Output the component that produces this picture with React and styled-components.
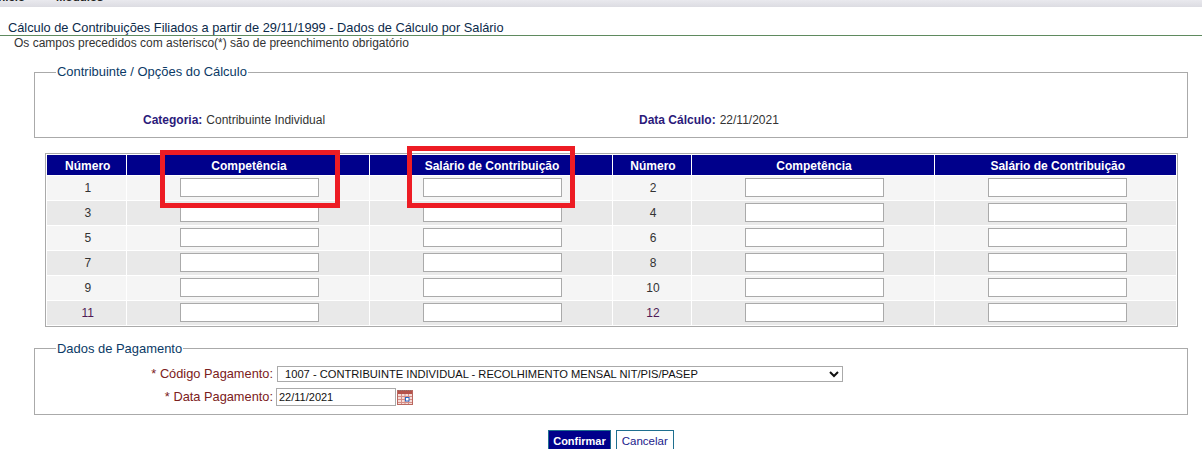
import { createGlobalStyle, styled } from "styled-components";

const GlobalStyle = createGlobalStyle`
  html, body {
    margin: 0;
    padding: 0;
    background: #fff;
  }
  body {
    font-family: "Liberation Sans", Arial, sans-serif;
    font-size: 12px;
    color: #333;
    overflow: hidden;
  }
`;

const Page = styled.div`
  position: relative;
  width: 1202px;
  height: 449px;
  overflow: hidden;
`;

const MenuBar = styled.div`
  height: 7px;
  background: linear-gradient(#e9e9ee, #dcdce2);
  display: flex;
  align-items: flex-end;
  gap: 31px;
  overflow: hidden;
`;

const MenuItem = styled.span`
  font-size: 11.5px;
  font-weight: 700;
  line-height: 14px;
  color: #222;
  margin-bottom: 3px;
  flex: none;
  &:first-child {
    margin-left: -5px;
  }
`;

const Title = styled.div`
  margin-top: 14px;
  padding-left: 8px;
  height: 14px;
  line-height: 14px;
  font-size: 12.8px;
  color: #0b2a4a;
  border-bottom: 1px solid #5f8a5f;
  white-space: nowrap;
`;

const Hint = styled.div`
  padding-left: 14px;
  line-height: 14px;
  height: 14px;
  font-size: 12px;
  color: #333;
`;

const Box = styled.fieldset`
  margin: ${(p) => p.$top}px 14px 0 34px;
  padding: 0;
  height: ${(p) => p.$height}px;
  box-sizing: border-box;
  border: 1px solid #aaa;
  min-width: 0;
`;

const Legend = styled.legend`
  margin-left: 21px;
  padding: 0 1px;
  font-size: 12.95px;
  line-height: 14px;
  color: #0b3a66;
`;

const SummaryRow = styled.div`
  display: grid;
  grid-template-columns: 496px 1fr;
  padding: 34px 0 0 108px;
  line-height: 14px;
  font-size: 12px;
`;

const SummaryLabel = styled.b`
  color: #2b1a7a;
  margin-right: 4px;
`;

const GridWrap = styled.div`
  margin: 15px 0 0 45px;
  width: 1133px;
  border: 1px solid #aaa;
  box-sizing: border-box;
  padding: 1px;
`;

const GridTable = styled.table`
  width: 100%;
  table-layout: fixed;
  border-collapse: collapse;
`;

const HeadCell = styled.th`
  background: #00008b;
  color: #fff;
  height: 20px;
  padding: 2px 0 0 3px;
  box-sizing: border-box;
  font-size: 12px;
  font-weight: 700;
  text-align: center;
  border-left: 1px solid #fff;
  &:first-child {
    border-left: 0;
  }
  &:last-child {
    padding-left: 5px;
  }
`;

const Row = styled.tr`
  background: ${(p) => (p.$odd ? "#f5f5f5" : "#e9e9e9")};
`;

const NumCell = styled.td`
  height: 24px;
  padding: 0 0 0 3px;
  text-align: center;
  color: ${(p) => (p.$dark ? "#4f1a55" : "#333")};
  border-left: 1px solid #fff;
  border-top: 1px solid #fff;
  &:first-child {
    border-left: 0;
  }
`;

const InputCell = styled.td`
  padding: 0 0 0 3px;
  text-align: center;
  border-left: 1px solid #fff;
  border-top: 1px solid #fff;
  &:last-child {
    padding-left: 5px;
  }
`;

const TextInput = styled.input`
  display: block;
  margin: 0 auto;
  width: 139px;
  height: 19px;
  box-sizing: border-box;
  padding: 1px 2px;
  border: 1px solid #aaa;
  background: #fff;
  font: 11px "Liberation Sans", Arial, sans-serif;
  color: #222;
`;

const FieldRow = styled.div`
  display: flex;
  align-items: center;
  height: 18px;
  margin-top: ${(p) => p.$top}px;
`;

const FieldLabel = styled.label`
  width: 238px;
  flex: none;
  text-align: right;
  font-size: 12.8px;
  color: #7b2020;
  margin-right: 3px;
`;

const SelectBox = styled.select`
  width: 566px;
  height: 16px;
  box-sizing: border-box;
  margin-left: 1px;
  padding: 0 0 0 3px;
  border: 1px solid #aaa;
  border-radius: 0;
  background: #fff;
  font: 11.15px "Liberation Sans", Arial, sans-serif;
  color: #111;
`;

const DateInput = styled(TextInput)`
  margin: 0;
  width: 120px;
  height: 18px;
  color: #111;
  font-size: 11px;
`;

const CalendarIcon = styled.svg`
  margin-left: 1px;
  flex: none;
`;

const Actions = styled.div`
  display: flex;
  justify-content: center;
  gap: 5px;
  margin-top: 15px;
  padding-left: 20px;
`;

const ActionButton = styled.button`
  height: 23px;
  box-sizing: border-box;
  padding: 0 ${(p) => (p.$primary ? 4 : 5)}px;
  border: 1px solid #1f6f8f;
  background: ${(p) => (p.$primary ? "#00008b" : "#fff")};
  color: ${(p) => (p.$primary ? "#fff" : "#1a1a8a")};
  font: ${(p) => (p.$primary ? "700 11px" : "400 11.5px")} "Liberation Sans", Arial, sans-serif;
`;

const Marker = styled.div`
  position: absolute;
  left: ${(p) => p.$x}px;
  top: ${(p) => p.$y}px;
  width: ${(p) => p.$w}px;
  height: ${(p) => p.$h}px;
  box-sizing: border-box;
  border: 5px solid #ed1c24;
  pointer-events: none;
`;

const rows = [
  [1, 2],
  [3, 4],
  [5, 6],
  [7, 8],
  [9, 10],
  [11, 12],
];

const heads = ["Número", "Competência", "Salário de Contribuição"];
const colWidths = [79, 243, 243, 79, 243, 242];

const App = () => (
  <Page>
    <GlobalStyle />
    <MenuBar>
      <MenuItem>Início</MenuItem>
      <MenuItem>Módulos</MenuItem>
    </MenuBar>
    <Title>Cálculo de Contribuições Filiados a partir de 29/11/1999 - Dados de Cálculo por Salário</Title>
    <Hint>Os campos precedidos com asterisco(*) são de preenchimento obrigatório</Hint>

    <Box $top={15} $height={73}>
      <Legend>Contribuinte / Opções do Cálculo</Legend>
      <SummaryRow>
        <span>
          <SummaryLabel>Categoria:</SummaryLabel>Contribuinte Individual
        </span>
        <span>
          <SummaryLabel>Data Cálculo:</SummaryLabel>22/11/2021
        </span>
      </SummaryRow>
    </Box>

    <GridWrap>
      <GridTable>
        <colgroup>
          {colWidths.map((w, i) => (
            <col key={i} width={w} />
          ))}
        </colgroup>
        <thead>
          <tr>
            {[...heads, ...heads].map((h, i) => (
              <HeadCell key={i}>{h}</HeadCell>
            ))}
          </tr>
        </thead>
        <tbody>
          {rows.map(([a, b], i) => (
            <Row key={a} $odd={i % 2 === 0}>
              <NumCell $dark={a === 11}>{a}</NumCell>
              <InputCell><TextInput /></InputCell>
              <InputCell><TextInput /></InputCell>
              <NumCell $dark={b === 12}>{b}</NumCell>
              <InputCell><TextInput /></InputCell>
              <InputCell><TextInput /></InputCell>
            </Row>
          ))}
        </tbody>
      </GridTable>
    </GridWrap>

    <Box $top={15} $height={73}>
      <Legend>Dados de Pagamento</Legend>
      <FieldRow $top={9}>
        <FieldLabel>* Código Pagamento:</FieldLabel>
        <SelectBox defaultValue="1007">
          <option value="1007">1007 - CONTRIBUINTE INDIVIDUAL - RECOLHIMENTO MENSAL NIT/PIS/PASEP</option>
        </SelectBox>
      </FieldRow>
      <FieldRow $top={5}>
        <FieldLabel>* Data Pagamento:</FieldLabel>
        <DateInput defaultValue="22/11/2021" />
        <CalendarIcon width="16" height="16" viewBox="0 0 16 16">
          <rect x="0.5" y="1.5" width="15" height="14" fill="#f6dcd8" stroke="#b9675f" />
          <rect x="1" y="2" width="14" height="3" fill="#b5524a" />
          <path d="M1 1.5h14" stroke="#8a6a66" strokeDasharray="1 1" />
          <path d="M1 7.5h14M1 10.5h14M1 13.5h14M4.5 5v10M8 5v10M11.5 5v10" stroke="#d58d86" strokeWidth="1" />
          <rect x="8.5" y="8.5" width="3.5" height="3.5" fill="#fff" stroke="#2b66c4" />
        </CalendarIcon>
      </FieldRow>
    </Box>

    <Actions>
      <ActionButton $primary>Confirmar</ActionButton>
      <ActionButton>Cancelar</ActionButton>
    </Actions>

    <Marker $x={160} $y={150} $w={180} $h={58} />
    <Marker $x={407} $y={146} $w={168} $h={62} />
  </Page>
);

export default App;
